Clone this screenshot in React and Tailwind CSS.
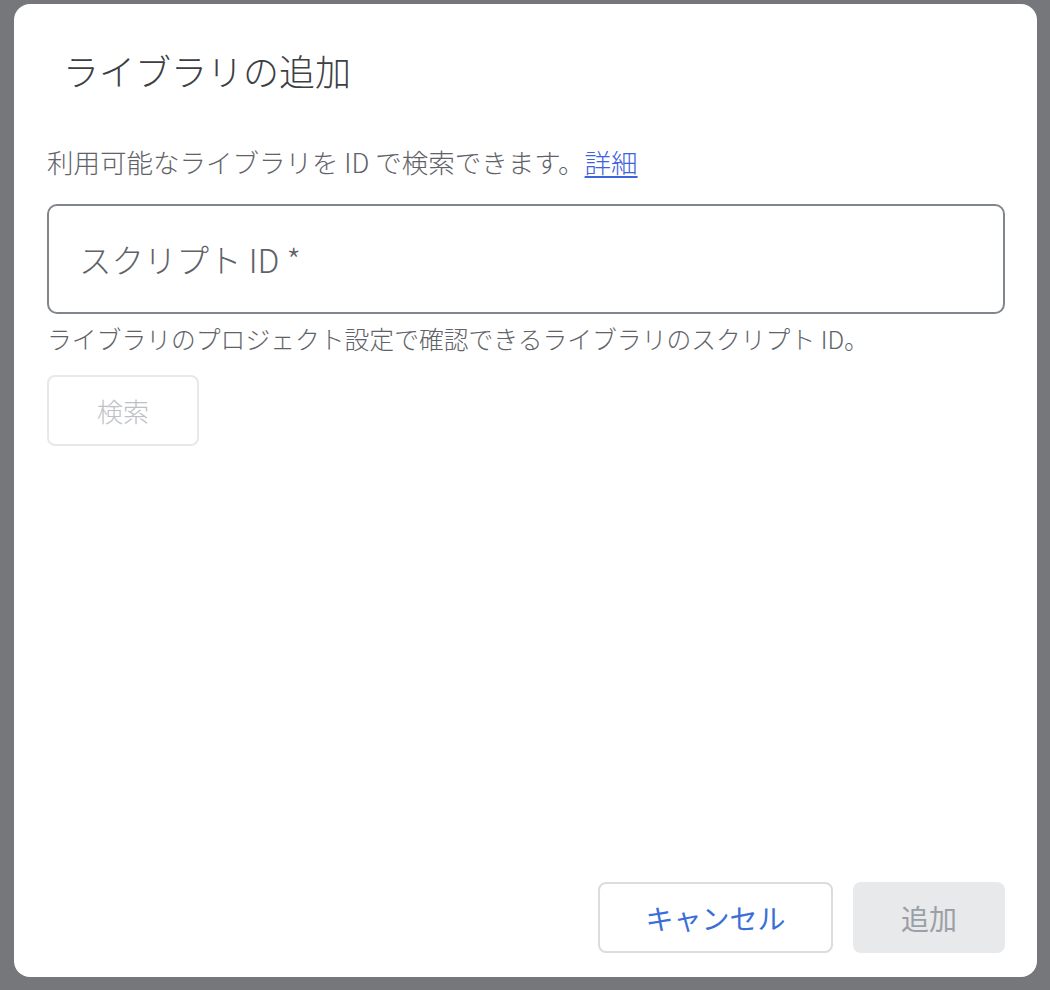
import React from "react";

export default function App() {
  const font = { fontFamily: '"Noto Sans CJK JP", "Noto Sans", sans-serif' };
  return (
    <div
      className="w-[1050px] h-[990px] bg-[#76777a] pt-[4px] pl-[14px] pr-[13px] pb-[13px] flex"
      style={font}
    >
      <div className="flex-1 bg-white rounded-[16px] flex flex-col pl-[33px] pr-[32px] pt-[45px] pb-[24px]">
        <h1 className="pl-[16px] text-[36px] leading-[42px] text-[#3c4043] font-light">
          ライブラリの追加
        </h1>
        <p className="mt-[55px] text-[26.5px] leading-[32px] text-[#5f6368] font-light">
          利用可能なライブラリを ID で検索できます。
          <a href="#" className="text-[#3e63dd] underline underline-offset-[3px]">
            詳細
          </a>
        </p>
        <div className="mt-[26px] h-[110px] border-2 border-[#80868b] rounded-[10px] flex items-center pl-[30px]">
          <span className="text-[32.5px] leading-[38px] text-[#5f6368] font-light">スクリプト ID *</span>
        </div>
        <p className="mt-[9px] text-[24.8px] leading-[30px] text-[#5f6368] font-light">
          ライブラリのプロジェクト設定で確認できるライブラリのスクリプト ID。
        </p>
        <div className="mt-[22px]">
          <button className="w-[152px] h-[71px] border-2 border-[#e6e8ea] rounded-[8px] text-[26px] text-[#bdc1c6] bg-white font-light">
            検索
          </button>
        </div>
        <div className="flex-1" />
        <div className="flex justify-end gap-[20px]">
          <button className="w-[235px] h-[71px] border-2 border-[#dadce0] rounded-[8px] text-[28px] text-[#3b6fd8] bg-white">
            キャンセル
          </button>
          <button className="w-[152px] h-[71px] rounded-[8px] text-[28px] text-[#9aa0a6] bg-[#e8e9ea]">
            追加
          </button>
        </div>
      </div>
    </div>
  );
}
